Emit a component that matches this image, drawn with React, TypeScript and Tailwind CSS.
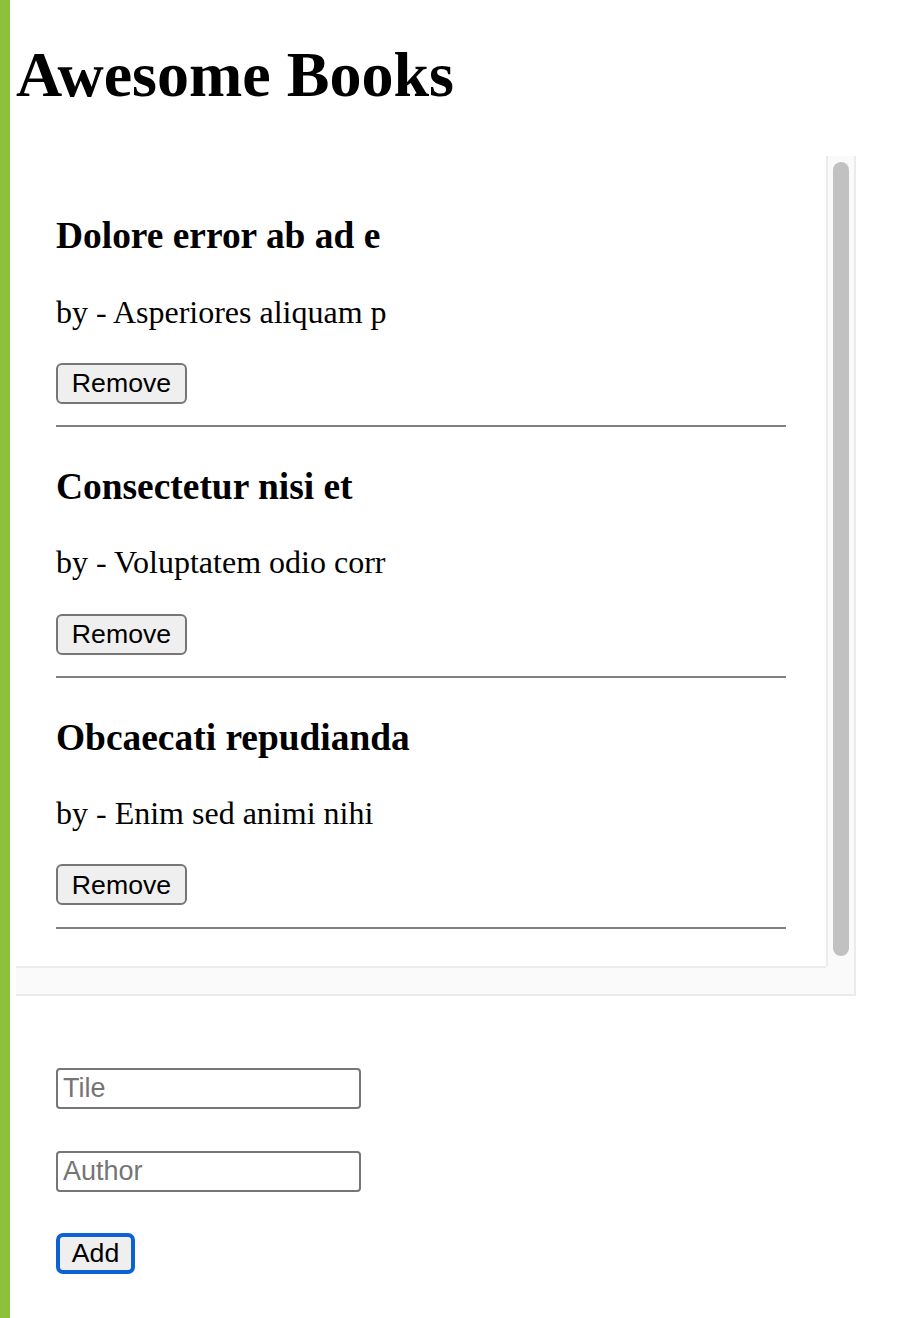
const books = [
  { title: "Dolore error ab ad e", author: "Asperiores aliquam p" },
  { title: "Consectetur nisi et", author: "Voluptatem odio corr" },
  { title: "Obcaecati repudianda", author: "Enim sed animi nihi" },
]

function BookItem({ title, author }: { title: string; author: string }) {
  return (
    <li className="flex flex-col">
      <h3 className="mt-[37.5px] text-[37.44px] leading-[43px] font-bold">{title}</h3>
      <p className="mt-[36.5px] text-[32px] leading-[36.8px]">by - {author}</p>
      <button className="mt-[32.5px] h-[41px] w-[131px] self-start rounded-[6px] border-2 border-[#767676] bg-[#efefef] font-['Liberation_Sans',Arial,sans-serif] text-[26.67px] leading-none text-black">
        Remove
      </button>
      <div className="mt-[21.5px] h-[2px] bg-[#808080]" />
    </li>
  )
}

export default function App() {
  return (
    <div className="min-h-[1318px] border-l-[10px] border-[#8dc03c] bg-white pl-[6px] font-['Liberation_Serif','Times_New_Roman',serif] text-black">
      <h1 className="pt-[38px] text-[64px] leading-[74px] font-bold">Awesome Books</h1>

      <div className="mt-[44px] flex w-[840px] flex-col">
        <div className="flex h-[810px]">
          <ul className="flex w-[810px] flex-col overflow-hidden px-[40px] pt-[20.5px]">
            {books.map((b) => (
              <BookItem key={b.title} title={b.title} author={b.author} />
            ))}
          </ul>
          <div className="flex w-[30px] justify-center border-x-2 border-[#ebebeb] bg-[#fafafa] pt-[6px] pb-[10px]">
            <div className="w-[16px] rounded-full bg-[#c1c1c1]" />
          </div>
        </div>
        <div className="flex h-[30px]">
          <div className="w-[810px] border-y-2 border-[#ebebeb] bg-[#fafafa]" />
          <div className="w-[30px] border-r-2 border-b-2 border-[#ebebeb] bg-[#fafafa]" />
        </div>
      </div>

      <form className="flex flex-col items-start pl-[40px] font-['Liberation_Sans',Arial,sans-serif]" onSubmit={(e) => e.preventDefault()}>
        <input
          placeholder="Tile"
          className="mt-[72px] h-[41px] w-[305px] rounded-[4px] border-2 border-[#767676] px-[5px] text-[27px] placeholder:text-[#757575]"
        />
        <input
          placeholder="Author"
          className="mt-[42px] h-[41px] w-[305px] rounded-[4px] border-2 border-[#767676] px-[5px] text-[27px] placeholder:text-[#757575]"
        />
        <button
          type="submit"
          className="mt-[41px] h-[41px] w-[79px] rounded-[7px] border-[4px] border-[#0c62d1] bg-[#efefef] text-[26.67px] leading-none text-black"
        >
          Add
        </button>
      </form>
    </div>
  )
}
